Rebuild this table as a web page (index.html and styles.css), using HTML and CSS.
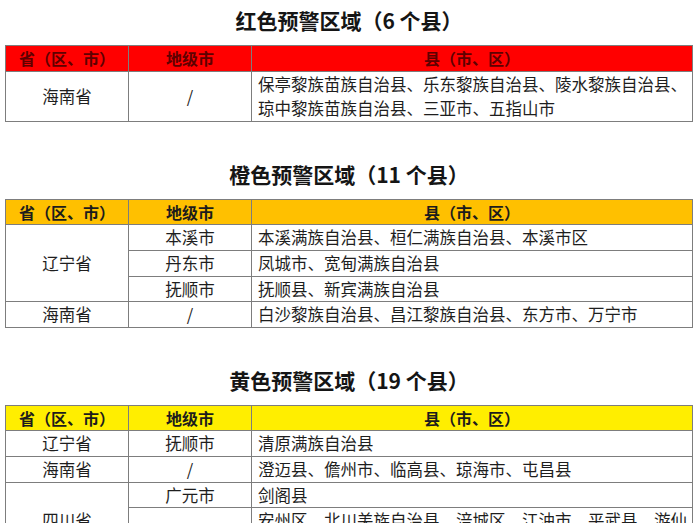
FILE: index.html
```html
<!DOCTYPE html>
<html lang="zh-CN">
<head>
<meta charset="utf-8">
<title>预警区域</title>
<link rel="stylesheet" href="styles.css">
</head>
<body>
<div class="page">
  <section class="block">
    <h2 class="title">红色预警区域（6 个县）</h2>
    <table class="grid red">
      <colgroup><col class="c1"><col class="c2"><col></colgroup>
      <tr class="head"><th>省（区、市）</th><th>地级市</th><th>县（市、区）</th></tr>
      <tr><td class="mid">海南省</td><td class="mid">/</td><td class="txt">保亭黎族苗族自治县、乐东黎族自治县、陵水黎族自治县、琼中黎族苗族自治县、三亚市、五指山市</td></tr>
    </table>
  </section>

  <section class="block">
    <h2 class="title">橙色预警区域（11 个县）</h2>
    <table class="grid orange">
      <colgroup><col class="c1"><col class="c2"><col></colgroup>
      <tr class="head"><th>省（区、市）</th><th>地级市</th><th>县（市、区）</th></tr>
      <tr><td class="mid" rowspan="3">辽宁省</td><td class="mid">本溪市</td><td class="txt">本溪满族自治县、桓仁满族自治县、本溪市区</td></tr>
      <tr><td class="mid">丹东市</td><td class="txt">凤城市、宽甸满族自治县</td></tr>
      <tr><td class="mid">抚顺市</td><td class="txt">抚顺县、新宾满族自治县</td></tr>
      <tr><td class="mid">海南省</td><td class="mid">/</td><td class="txt">白沙黎族自治县、昌江黎族自治县、东方市、万宁市</td></tr>
    </table>
  </section>

  <section class="block">
    <h2 class="title">黄色预警区域（19 个县）</h2>
    <table class="grid yellow">
      <colgroup><col class="c1"><col class="c2"><col></colgroup>
      <tr class="head"><th>省（区、市）</th><th>地级市</th><th>县（市、区）</th></tr>
      <tr><td class="mid">辽宁省</td><td class="mid">抚顺市</td><td class="txt">清原满族自治县</td></tr>
      <tr><td class="mid">海南省</td><td class="mid">/</td><td class="txt">澄迈县、儋州市、临高县、琼海市、屯昌县</td></tr>
      <tr><td class="mid" rowspan="2">四川省</td><td class="mid">广元市</td><td class="txt">剑阁县</td></tr>
      <tr><td class="mid">绵阳市</td><td class="txt">安州区、北川羌族自治县、涪城区、江油市、平武县、游仙区</td></tr>
    </table>
  </section>
</div>
</body>
</html>
```

FILE: styles.css
```css
html, body {
  margin: 0;
  padding: 0;
  background: #ffffff;
  overflow: hidden;
}

body {
  font-family: "Noto Sans CJK SC", "Noto Sans", sans-serif;
  color: #1e1e1e;
}

.page {
  padding: 0 7px 0 5px;
}

.block + .block {
  margin-top: 32px;
}

.title {
  margin: 0 0 5px 0;
  height: 40px;
  line-height: 40px;
  text-align: center;
  font-size: 21px;
  font-weight: 700;
  color: #151515;
}

.grid {
  width: 688px;
  border-collapse: collapse;
  table-layout: fixed;
  font-size: 16.5px;
}

.grid .c1,
.grid .c2 {
  width: 123px;
}

.grid th,
.grid td {
  border: 1px solid #7d7d7d;
  padding: 0;
  line-height: 24.6px;
}

.grid th {
  font-size: 16px;
  font-weight: 700;
  text-align: center;
}

.grid .mid {
  text-align: center;
}

.grid .txt {
  text-align: left;
  padding-left: 6px;
  padding-right: 4px;
}

.red .head th {
  background: #ff0000;
  color: #5e0000;
}

.orange .head th {
  background: #ffc000;
  color: #1c1c1c;
}

.yellow .head th {
  background: #ffee00;
  color: #1c1c1c;
}
```
